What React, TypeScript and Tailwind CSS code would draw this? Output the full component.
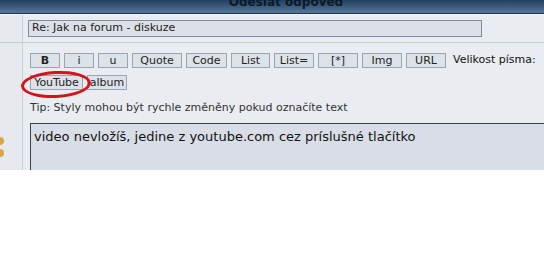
import React from 'react';

const buttons = [
  { label: 'B', w: 'w-[30px]', bold: true },
  { label: 'i', w: 'w-[30px]' },
  { label: 'u', w: 'w-[30px]' },
  { label: 'Quote', w: 'w-[50px]' },
  { label: 'Code', w: 'w-[41px]' },
  { label: 'List', w: 'w-[39px]' },
  { label: 'List=', w: 'w-[40px]' },
  { label: '[*]', w: 'w-[40px]' },
  { label: 'Img', w: 'w-[40px]' },
  { label: 'URL', w: 'w-[40px]' },
];

const Btn = ({ label, w, bold }: { label: string; w?: string; bold?: boolean }) => (
  <div
    className={`${w ?? ''} h-[15px] flex items-center justify-center border border-[#9aa5b0] bg-[#dde2e8] text-[11px] leading-none text-[#222] ${bold ? 'font-bold' : ''}`}
  >
    {label}
  </div>
);

export default function App() {
  return (
    <div className="w-[544px] h-[263px] bg-white overflow-hidden font-['DejaVu_Sans',sans-serif]">
      <div className="h-[14px] bg-gradient-to-b from-[#22405f] to-[#56779b] border-b border-[#1d3550] overflow-hidden flex justify-center pl-[28px]">
        <span className="text-[12px] font-bold leading-none mt-[-4px] text-[#0c1a28]">Odeslat odpověď</span>
      </div>
      <div className="h-[1px] bg-[#f4f6f8]" />

      <div className="flex h-[28px] bg-[#e9ecf0] border-b border-[#c5ccd4]">
        <div className="w-[23px] border-r border-[#c8cfd7] bg-[#e6e9ee]" />
        <div className="flex-1 flex items-center pl-[5px]">
          <div className="w-[454px] h-[17px] border border-[#7d8c9b] bg-[#dce1e7] flex items-center pl-[3px] text-[11px] text-[#222]">
            Re: Jak na forum - diskuze
          </div>
        </div>
      </div>

      <div className="flex h-[127px] bg-[#e9ecf0]">
        <div className="w-[23px] border-r border-[#c8cfd7] bg-[#e6e9ee] flex flex-col pt-[94px]">
          <div className="w-[4px] h-[8px] rounded-r-full bg-[#d9a640]" />
          <div className="w-[4px] h-[8px] rounded-r-full bg-[#d9a640] mt-[4px]" />
        </div>
        <div className="flex-1 flex flex-col pl-[7px] pt-[9px]">
          <div className="flex items-center gap-[4px]">
            {buttons.map((b) => (
              <Btn key={b.label} label={b.label} w={b.w} bold={b.bold} />
            ))}
            <span className="text-[11px] text-[#111] ml-[3px] whitespace-nowrap">Velikost písma:</span>
          </div>
          <div className="flex items-center gap-[4px] mt-[6px] relative">
            <Btn label="YouTube" w="w-[53px]" />
            <Btn label="album" w="w-[40px]" />
            <div className="absolute left-[-9px] top-[-4px] w-[70px] h-[27px] rounded-[50%] border-[3px] border-[#d8121a] -rotate-3" />
          </div>
          <div className="text-[11px] text-[#333] mt-[12px] leading-none">
            Tip: Styly mohou být rychle změněny pokud označíte text
          </div>
          <div className="mt-[10px] flex-1 border-t border-l border-[#3a424c] bg-[#d9dee6] pl-[3px] pt-[3px] text-[13px] text-[#111] whitespace-nowrap">
            video nevložíš, jedine z youtube.com cez príslušné tlačítko
          </div>
        </div>
      </div>
    </div>
  );
}
